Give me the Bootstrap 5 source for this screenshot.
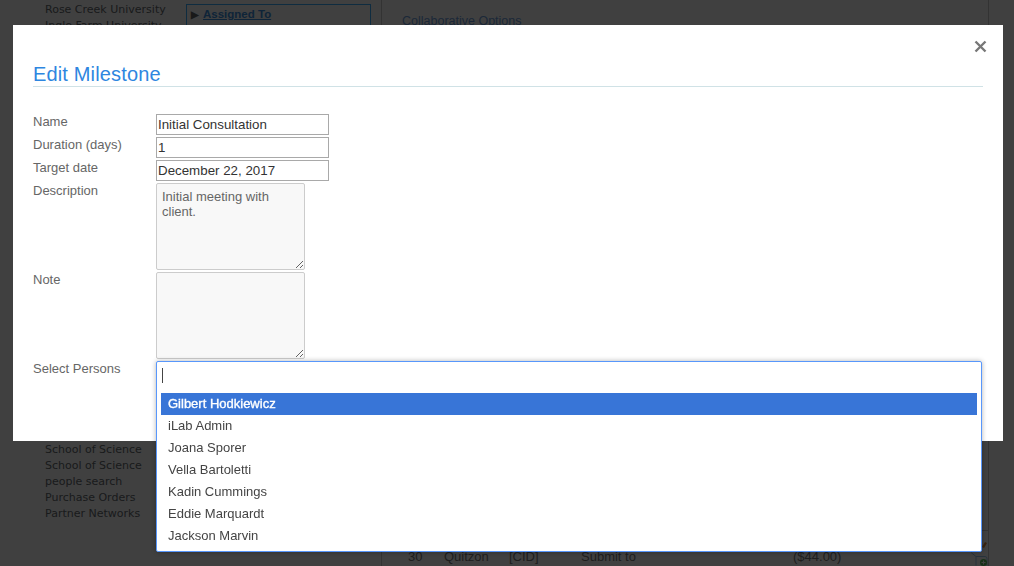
<!DOCTYPE html>
<html lang="en">
<head>
<meta charset="utf-8">
<title>Edit Milestone</title>
<link href="https://cdn.jsdelivr.net/npm/bootstrap@5.3.0/dist/css/bootstrap.min.css" rel="stylesheet">
<style>
html,body{height:566px;overflow:hidden}
body{font-family:"Liberation Sans",Arial,sans-serif;background:#fff;color:#666}
.page-wrap{width:989px;height:566px}
.side-col{width:382px;flex:none;border-right:1px solid #ccc}
.side-links{width:186px;padding:2px 0 0 45px;font:11px/16px "DejaVu Sans",sans-serif;color:#666b70}
.side-links div{white-space:nowrap}
.side-gap{height:376px}
.assign-box{width:185px;height:60px;margin:4px 0 0 0;border:1px solid #3cb0ff;padding:0 4px;font-size:11.5px;line-height:18px;font-weight:700;color:#3c90e0;white-space:nowrap}
.assign-arrow{color:#666;font-size:10px;margin-right:4px}
.main-col{width:607px;flex:none;border-right:1px solid #ccc;position:relative}
.collab-title{padding:13px 0 0 20px;font-size:12.5px;line-height:16px;color:#6f9fe0}
.main-gap{height:502px;border-bottom:1px solid #ccc}
.data-row{padding:18px 0 0 26px;font-size:13px;line-height:16px;color:#777}
.data-row span{display:inline-block}
.c1{width:36px}.c2{width:65px}.c3{width:72px}.c4{width:212px}
.row-icons{top:537px;left:588px}
.modal-backdrop.show{opacity:.75}
.modal{overflow:hidden!important}
.ms-dialog{max-width:none;width:990px;margin:25px 0 0 13px;transform:none!important}
.ms-content{height:416px;border:0;border-radius:0;padding:37px 20px 0;display:block}
.ms-close{top:15px;right:16px;width:13px;height:13px;line-height:0}
.ms-title{margin:0;height:25px;font-size:20px;line-height:24px;letter-spacing:.15px;font-weight:400;color:#2e86e0;border-bottom:1px solid #d0e2e6}
.ms-form{display:grid;grid-template-columns:123px 1fr;row-gap:2px;margin-top:27px;color:#666}
.ms-form label{font-size:13px;line-height:14px;margin:0;padding-top:1px}
.ms-text{display:block;width:173px;height:21px;border:1px solid #a9a9a9;padding:0 1px;font:13.33px/19px "Liberation Sans",sans-serif;color:#333;outline:0;background:#fff}
.ms-area{display:block;width:149px;height:87px;border:1px solid #ccc;border-radius:2px;padding:5px;font:13px/15px "Liberation Sans",sans-serif;color:#666;background:#f8f8f8;outline:0}
.pick-holder{height:27px;position:relative}
.pick-box{left:0;top:0;width:826px;height:191px;background:#fff;border:1px solid #5897fb;border-radius:2px;box-shadow:0 0 5px rgba(0,0,0,.3)}
.pick-search{height:31px;padding:6px 0 0 5px}
.pick-caret{display:block;width:1px;height:15px;background:#444}
.pick-list{margin:0 4px;padding:0;list-style:none;font-size:13px;line-height:22px;color:#444}
.pick-list li{height:22px;padding-left:7px;white-space:nowrap}
.pick-list li.is-current{background:#3875d7;color:#fff;-webkit-text-stroke:.35px #fff}
</style>
</head>
<body>
<div class="page-wrap d-flex">
  <div class="side-col">
    <div class="d-flex">
      <div class="side-links">
        <div>Rose Creek University</div>
        <div>Ingle Farm University</div>
      </div>
      <div class="assign-box"><span class="assign-arrow">&#9654;</span><u>Assigned To</u></div>
    </div>
    <div class="side-links">
      <div class="side-gap"></div>
      <div>School of Science</div>
      <div>School of Science</div>
      <div>people search</div>
      <div>Purchase Orders</div>
      <div>Partner Networks</div>
    </div>
  </div>
  <div class="main-col">
    <div class="collab-title">Collaborative Options</div>
    <div class="main-gap"></div>
    <div class="data-row"><span class="c1">30</span><span class="c2">Quitzon</span><span class="c3">[CID]</span><span class="c4">Submit to</span><span>($44.00)</span></div>
    <svg class="row-icons position-absolute" width="18" height="29" viewBox="0 0 18 29" aria-hidden="true">
      <path d="M12 10l3-5 2 1-3 5z" fill="#e08a40"/>
      <path d="M1 15.500l5 4h9a2 2 0 0 1 2 2v7M6 19.500v9" fill="none" stroke="#9cc8f0"/>
      <circle cx="13.500" cy="25.500" r="3.500" fill="#60c060"/>
      <path d="M11.500 25.500h4M13.500 23.500v4" stroke="#fff"/>
    </svg>
  </div>
</div>

<div class="modal-backdrop show"></div>
<div class="modal d-block" tabindex="-1">
  <div class="modal-dialog ms-dialog">
    <div class="modal-content ms-content">
      <button type="button" class="ms-close position-absolute border-0 bg-transparent p-0" aria-label="Close">
        <svg width="13" height="13" viewBox="0 0 13 13" aria-hidden="true"><path d="M1.500 1.500l10 10M11.500 1.500l-10 10" stroke="#777" stroke-width="2.400" fill="none"/></svg>
      </button>
      <h5 class="ms-title">Edit Milestone</h5>
      <form class="ms-form">
        <label>Name</label><input class="ms-text" type="text" value="Initial Consultation">
        <label>Duration (days)</label><input class="ms-text" type="text" value="1">
        <label>Target date</label><input class="ms-text" type="text" value="December 22, 2017">
        <label>Description</label><textarea class="ms-area">Initial meeting with client.</textarea>
        <label>Note</label><textarea class="ms-area"></textarea>
        <label>Select Persons</label>
        <div class="pick-holder">
          <div class="pick-box position-absolute">
            <div class="pick-search"><span class="pick-caret"></span></div>
            <ul class="pick-list">
              <li class="is-current">Gilbert Hodkiewicz</li>
              <li>iLab Admin</li>
              <li>Joana Sporer</li>
              <li>Vella Bartoletti</li>
              <li>Kadin Cummings</li>
              <li>Eddie Marquardt</li>
              <li>Jackson Marvin</li>
            </ul>
          </div>
        </div>
      </form>
    </div>
  </div>
</div>
<script src="https://cdn.jsdelivr.net/npm/bootstrap@5.3.0/dist/js/bootstrap.bundle.min.js"></script>
</body>
</html>
